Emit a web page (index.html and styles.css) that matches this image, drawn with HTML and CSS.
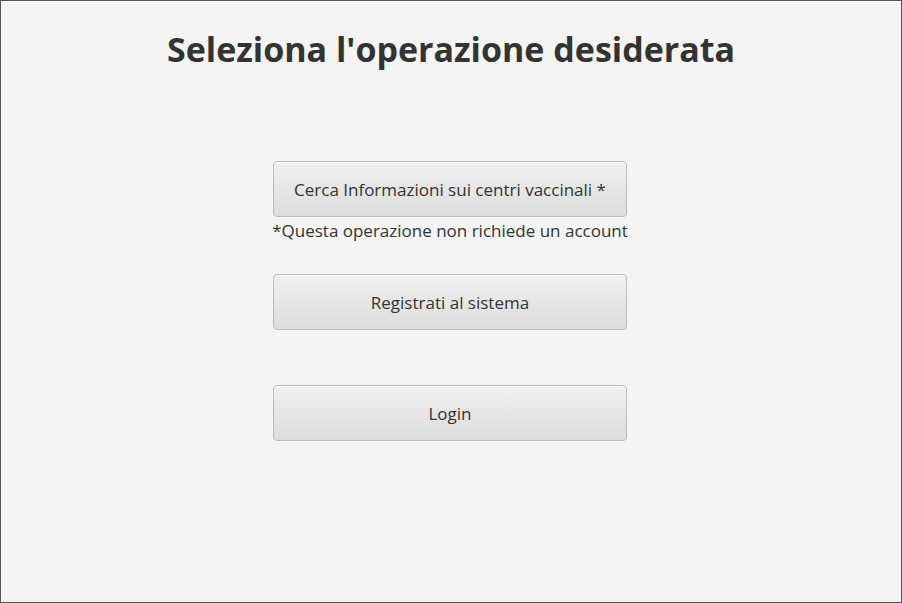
FILE: index.html
```html
<!DOCTYPE html>
<html lang="it">
<head>
<meta charset="utf-8">
<link rel="stylesheet" href="styles.css">
<title>Seleziona</title>
</head>
<body>
<div class="window">
  <h1 class="title">Seleziona l'operazione desiderata</h1>
  <div class="actions">
    <button class="btn btn-first">Cerca Informazioni sui centri vaccinali *</button>
    <p class="note">*Questa operazione non richiede un account</p>
    <button class="btn btn-second">Registrati al sistema</button>
    <button class="btn btn-third">Login</button>
  </div>
</div>
</body>
</html>
```
FILE: styles.css
```css
html, body {
  margin: 0;
  padding: 0;
}
body {
  width: 902px;
  height: 603px;
  font-family: "Open Sans", "Noto Sans", sans-serif;
  color: #333;
}
.window {
  box-sizing: border-box;
  width: 902px;
  height: 603px;
  border: 1px solid #555;
  background: #f4f4f4;
  display: flex;
  flex-direction: column;
  align-items: center;
}
.title {
  margin: 28px 0 0 0;
  font-size: 34px;
  line-height: 40px;
  font-weight: 700;
  color: #333;
  letter-spacing: 0;
}
.actions {
  display: flex;
  flex-direction: column;
  align-items: center;
  margin-top: 92px;
  margin-right: 2px;
}
.btn {
  box-sizing: border-box;
  width: 354px;
  height: 56px;
  border: 1px solid #bcbcbc;
  border-radius: 4px;
  background: linear-gradient(#f0f0f0, #dcdcdc);
  box-shadow: inset 0 1px 0 #fafafa;
  font-family: "Open Sans", "Noto Sans", sans-serif;
  font-size: 17px;
  color: #333;
  padding: 0;
}
.note {
  margin: 3px 0 0 0;
  font-size: 17px;
  line-height: 22px;
  color: #333;
}
.btn-second {
  margin-top: 32px;
}
.btn-third {
  margin-top: 55px;
}
```
